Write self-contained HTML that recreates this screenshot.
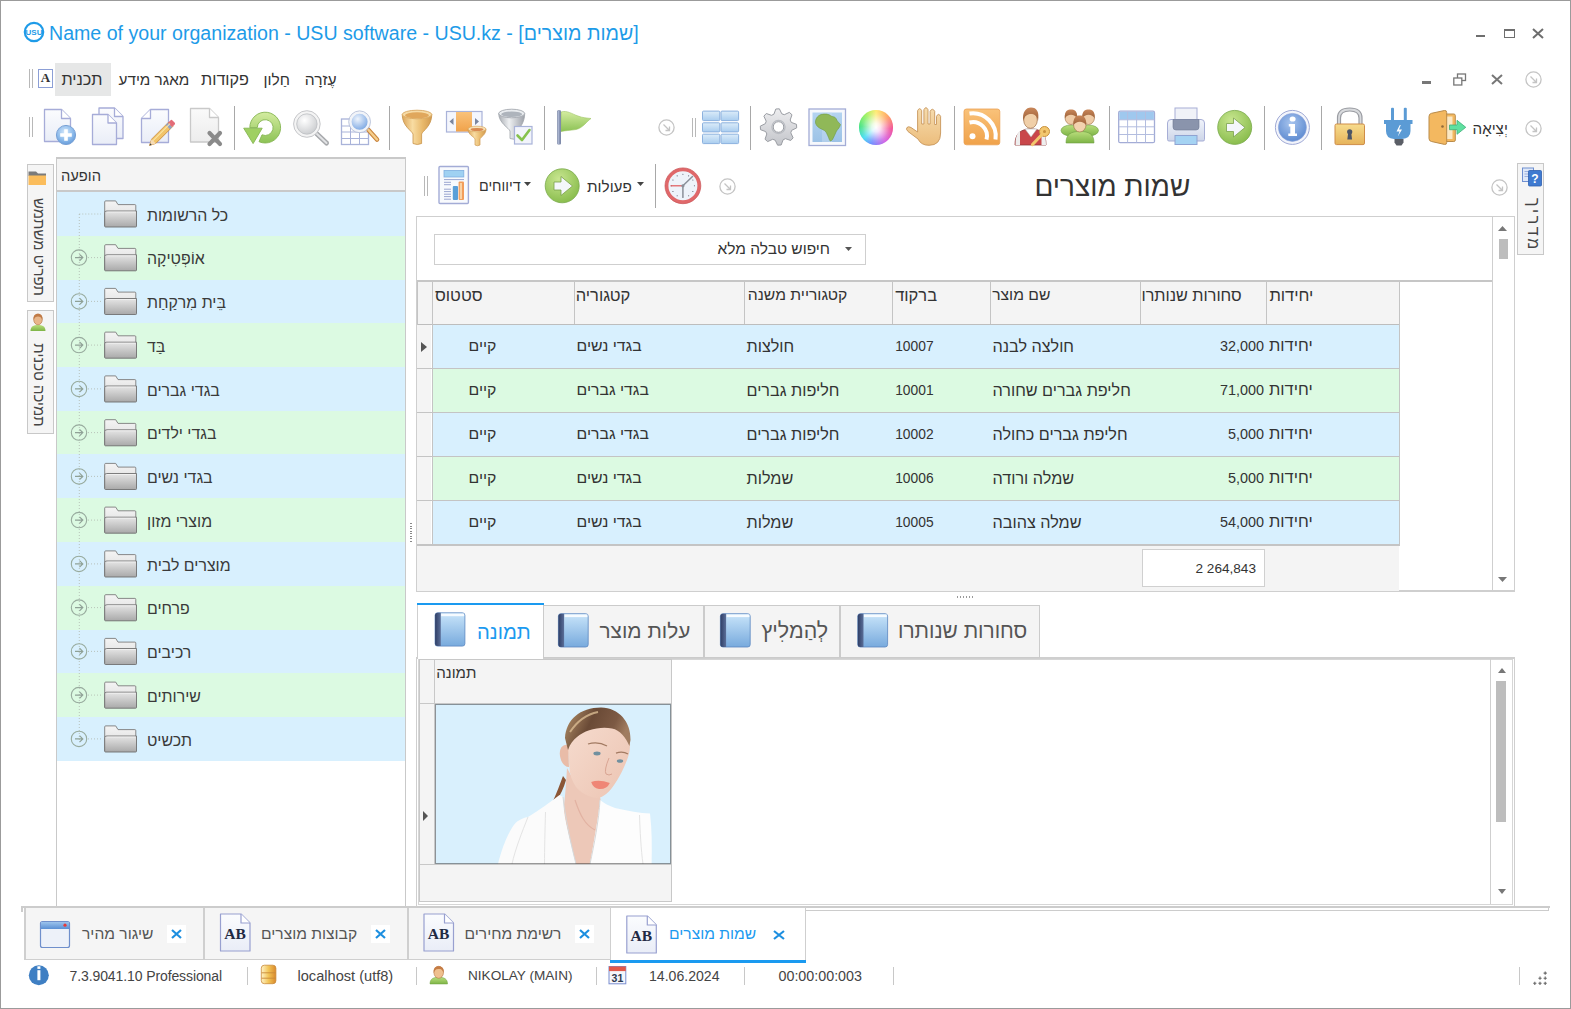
<!DOCTYPE html>
<html><head><meta charset="utf-8"><title>USU</title>
<style>
html,body{margin:0;padding:0;width:1571px;height:1009px;overflow:hidden;background:#fff}
.a{position:absolute}
.t{position:absolute;white-space:pre;line-height:1;font-family:"Liberation Sans", sans-serif}
svg{overflow:visible}
</style></head><body>
<div class="a" style="left:0px;top:0px;width:1571px;height:1009px;border:1px solid #9b9b9b;box-sizing:border-box;background:#fff"></div>
<svg class="a" style="left:23px;top:21px" width="22" height="22" viewBox="0 0 22 22"><circle cx="11" cy="11" r="9.2" fill="none" stroke="#1e9be8" stroke-width="2.2"/><text x="11" y="14" font-family="Liberation Sans" font-weight="bold" font-size="8" fill="#1e9be8" text-anchor="middle">USU</text></svg>
<div class="t " style="left:49.0px;top:24.3px;font-size:19.6px;color:#1d9be8;">Name of your organization - USU software - USU.kz - [שמות מוצרים]</div>
<div class="a" style="left:1476px;top:35px;width:9px;height:2px;background:#6e6e6e"></div>
<div class="a" style="left:1503.5px;top:29px;width:11.5px;height:9px;border:1px solid #6e6e6e;border-top-width:2px;box-sizing:border-box"></div>
<svg class="a" style="left:1532px;top:28px" width="12" height="11" viewBox="0 0 12 11"><path d="M1 1L11 10M11 1L1 10" stroke="#6e6e6e" stroke-width="2"/></svg>
<div class="a" style="left:29px;top:69px;width:1px;height:19px;background:#b8b8b8"></div>
<div class="a" style="left:32px;top:69px;width:1px;height:19px;background:#b8b8b8"></div>
<div class="a" style="left:38px;top:69px;width:15px;height:19px;border:1px solid #8c9fd6;box-sizing:border-box;background:#fff"></div>
<div class="a" style="left:38px;top:70px;width:15px;text-align:center;font:bold 13px 'Liberation Serif';color:#333">A</div>
<div class="a" style="left:55px;top:62.6px;width:56px;height:33.4px;background:#e6e7e7"></div>
<div class="t " style="left:61.5px;top:71.2px;font-size:16.2px;color:#333;">תכנית</div>
<div class="t " style="left:118.5px;top:72.0px;font-size:15.3px;color:#333;">מאגר מידע</div>
<div class="t " style="left:201.0px;top:71.2px;font-size:16.2px;color:#333;">פקודות</div>
<div class="t " style="left:263.5px;top:71.8px;font-size:15.5px;color:#333;">חַלון</div>
<div class="t " style="left:304.8px;top:71.7px;font-size:15.6px;color:#333;">עֶזרָה</div>
<div class="a" style="left:1422px;top:81px;width:9px;height:3px;background:#777"></div>
<svg class="a" style="left:1453px;top:73px" width="14" height="13" viewBox="0 0 14 13"><rect x="4.5" y="1" width="8" height="6.5" fill="none" stroke="#777" stroke-width="1.3"/><rect x="0.8" y="5" width="8" height="7" fill="#fff" stroke="#777" stroke-width="1.3"/></svg>
<svg class="a" style="left:1491px;top:74px" width="12" height="11" viewBox="0 0 12 11"><path d="M1 1L11 10M11 1L1 10" stroke="#777" stroke-width="2"/></svg>
<svg class="a" style="left:1523.5px;top:69.5px" width="19" height="19" viewBox="0 0 19 19"><circle cx="9.5" cy="9.5" r="7.6" fill="none" stroke="#c4c4c4" stroke-width="1.3"/><path d="M6.5 6.5L12.5 12.5M12.5 8.5V12.5H8.5" fill="none" stroke="#c4c4c4" stroke-width="1.3"/></svg>
<div class="a" style="left:29px;top:117px;width:1px;height:20px;background:#b8b8b8"></div>
<div class="a" style="left:32px;top:117px;width:1px;height:20px;background:#b8b8b8"></div>
<div class="a" style="left:234px;top:106px;width:1px;height:44px;background:#a8a8a8"></div>
<div class="a" style="left:389px;top:106px;width:1px;height:44px;background:#a8a8a8"></div>
<div class="a" style="left:544px;top:106px;width:1px;height:44px;background:#a8a8a8"></div>
<div class="a" style="left:750px;top:106px;width:1px;height:44px;background:#a8a8a8"></div>
<div class="a" style="left:954px;top:106px;width:1px;height:44px;background:#a8a8a8"></div>
<div class="a" style="left:1109px;top:106px;width:1px;height:44px;background:#a8a8a8"></div>
<div class="a" style="left:1264px;top:106px;width:1px;height:44px;background:#a8a8a8"></div>
<div class="a" style="left:1321px;top:106px;width:1px;height:44px;background:#a8a8a8"></div>
<svg class="a" style="left:657.0px;top:118.0px" width="19" height="19" viewBox="0 0 19 19"><circle cx="9.5" cy="9.5" r="7.6" fill="none" stroke="#c4c4c4" stroke-width="1.3"/><path d="M6.5 6.5L12.5 12.5M12.5 8.5V12.5H8.5" fill="none" stroke="#c4c4c4" stroke-width="1.3"/></svg>
<div class="a" style="left:692px;top:118px;width:1px;height:19px;background:#b8b8b8"></div>
<div class="a" style="left:695px;top:118px;width:1px;height:19px;background:#b8b8b8"></div>
<svg class="a" style="left:1523.5px;top:118.5px" width="19" height="19" viewBox="0 0 19 19"><circle cx="9.5" cy="9.5" r="7.6" fill="none" stroke="#c4c4c4" stroke-width="1.3"/><path d="M6.5 6.5L12.5 12.5M12.5 8.5V12.5H8.5" fill="none" stroke="#c4c4c4" stroke-width="1.3"/></svg>
<div class="t " style="left:1472.5px;top:121.1px;font-size:15.2px;color:#333;">יְצִיאָה</div>

<div class="a" style="left:858.7px;top:110.3px;width:34.4px;height:34.4px;border-radius:50%;background:conic-gradient(from 0deg,#ffe860,#ff9a50 45deg,#f03a8a 95deg,#d050e0 145deg,#6080ff 195deg,#30d8f0 230deg,#30e070 275deg,#90f050 320deg,#ffe860)"><div style="width:100%;height:100%;border-radius:50%;background:radial-gradient(circle,#ffffff 0%,rgba(255,255,255,0.85) 18%,rgba(255,255,255,0.25) 55%,rgba(255,255,255,0) 80%)"></div></div>
<div class="a" style="left:27px;top:164px;width:27px;height:138px;background:#f5f5f5;border:1px solid #c8c8c8;box-sizing:border-box"></div>
<div class="a" style="left:27px;top:310px;width:27px;height:124px;background:#f5f5f5;border:1px solid #c8c8c8;box-sizing:border-box"></div>
<div class="t" style="left:38.5px;top:247px;font-size:15px;color:#444;transform:translate(-50%,-50%) rotate(90deg)">תפריט משתמש</div>
<div class="t" style="left:38.5px;top:385px;font-size:15px;color:#444;transform:translate(-50%,-50%) rotate(90deg)">תמיכה טכנית</div>
<div class="a" style="left:56px;top:157px;width:350px;height:750px;border:1px solid #c9c9c9;border-width:2px 1px 1px 1px;box-sizing:border-box;background:#fff"></div>
<div class="a" style="left:57px;top:159px;width:348px;height:33px;background:#f4f4f4;border-bottom:2px solid #c9c9c9;box-sizing:border-box"></div>
<div class="t " style="left:61.0px;top:169.0px;font-size:14.7px;color:#333;">הופעה</div>
<div class="a" style="left:57px;top:192px;width:348px;height:44px;background:#d8f0fe"></div>

<div class="t " style="left:147.0px;top:207.6px;font-size:15.9px;color:#3a3a3a;">כל הרשומות</div>
<div class="a" style="left:57px;top:236px;width:348px;height:44px;background:#dcfae2"></div>


<div class="t " style="left:147.0px;top:251.3px;font-size:15.9px;color:#3a3a3a;">אוֹפְּטִיקָה</div>
<div class="a" style="left:57px;top:280px;width:348px;height:43px;background:#d8f0fe"></div>


<div class="t " style="left:147.0px;top:295.1px;font-size:15.9px;color:#3a3a3a;">בֵּית מִרקַחַת</div>
<div class="a" style="left:57px;top:323px;width:348px;height:44px;background:#dcfae2"></div>


<div class="t " style="left:147.0px;top:338.8px;font-size:15.9px;color:#3a3a3a;">בַּד</div>
<div class="a" style="left:57px;top:367px;width:348px;height:44px;background:#d8f0fe"></div>


<div class="t " style="left:147.0px;top:382.6px;font-size:15.9px;color:#3a3a3a;">בגדי גברים</div>
<div class="a" style="left:57px;top:411px;width:348px;height:43px;background:#dcfae2"></div>


<div class="t " style="left:147.0px;top:426.3px;font-size:15.9px;color:#3a3a3a;">בגדי ילדים</div>
<div class="a" style="left:57px;top:454px;width:348px;height:44px;background:#d8f0fe"></div>


<div class="t " style="left:147.0px;top:470.1px;font-size:15.9px;color:#3a3a3a;">בגדי נשים</div>
<div class="a" style="left:57px;top:498px;width:348px;height:44px;background:#dcfae2"></div>


<div class="t " style="left:147.0px;top:513.8px;font-size:15.9px;color:#3a3a3a;">מוצרי מזון</div>
<div class="a" style="left:57px;top:542px;width:348px;height:44px;background:#d8f0fe"></div>


<div class="t " style="left:147.0px;top:557.6px;font-size:15.9px;color:#3a3a3a;">מוצרים לבית</div>
<div class="a" style="left:57px;top:586px;width:348px;height:44px;background:#dcfae2"></div>


<div class="t " style="left:147.0px;top:601.3px;font-size:15.9px;color:#3a3a3a;">פרחים</div>
<div class="a" style="left:57px;top:630px;width:348px;height:43px;background:#d8f0fe"></div>


<div class="t " style="left:147.0px;top:645.1px;font-size:15.9px;color:#3a3a3a;">רכיבים</div>
<div class="a" style="left:57px;top:673px;width:348px;height:44px;background:#dcfae2"></div>


<div class="t " style="left:147.0px;top:688.8px;font-size:15.9px;color:#3a3a3a;">שירותים</div>
<div class="a" style="left:57px;top:717px;width:348px;height:44px;background:#d8f0fe"></div>


<div class="t " style="left:147.0px;top:732.6px;font-size:15.9px;color:#3a3a3a;">תכשיט</div>

<div class="a" style="left:424px;top:176px;width:1px;height:20px;background:#b8b8b8"></div>
<div class="a" style="left:427px;top:176px;width:1px;height:20px;background:#b8b8b8"></div>
<div class="t " style="left:479.0px;top:179.3px;font-size:14.3px;color:#333;">דיווחים</div>
<svg class="a" style="left:524px;top:182px" width="8" height="5" viewBox="0 0 8 5"><path d="M0 0H7L3.5 4Z" fill="#444"/></svg>
<div class="t " style="left:587.0px;top:178.5px;font-size:15.3px;color:#333;">פעולות</div>
<svg class="a" style="left:637px;top:182px" width="8" height="5" viewBox="0 0 8 5"><path d="M0 0H7L3.5 4Z" fill="#444"/></svg>
<div class="a" style="left:655px;top:164px;width:1px;height:44px;background:#a8a8a8"></div>
<svg class="a" style="left:718.2px;top:176.9px" width="19" height="19" viewBox="0 0 19 19"><circle cx="9.5" cy="9.5" r="7.6" fill="none" stroke="#c4c4c4" stroke-width="1.3"/><path d="M6.5 6.5L12.5 12.5M12.5 8.5V12.5H8.5" fill="none" stroke="#c4c4c4" stroke-width="1.3"/></svg>
<div class="t " style="left:1034.5px;top:173.3px;font-size:27.9px;color:#333;">שמות מוצרים</div>
<svg class="a" style="left:1489.5px;top:177.5px" width="19" height="19" viewBox="0 0 19 19"><circle cx="9.5" cy="9.5" r="7.6" fill="none" stroke="#c4c4c4" stroke-width="1.3"/><path d="M6.5 6.5L12.5 12.5M12.5 8.5V12.5H8.5" fill="none" stroke="#c4c4c4" stroke-width="1.3"/></svg>
<div class="a" style="left:1517px;top:163px;width:27px;height:92px;background:#f5f5f5;border:1px solid #c8c8c8;box-sizing:border-box"></div>
<div class="t" style="left:1532.5px;top:225px;font-size:16px;letter-spacing:2.6px;color:#444;transform:translate(-50%,-50%) rotate(90deg)">מדריך</div>
<div class="a" style="left:416px;top:216px;width:1099px;height:376px;border:1px solid #cfcfcf;border-width:1px 1px 2px 1px;box-sizing:border-box;background:#fff"></div>
<div class="a" style="left:434px;top:234px;width:432px;height:31px;border:1px solid #cfcfcf;box-sizing:border-box;background:#fff"></div>
<div class="t " style="left:717.5px;top:240.8px;font-size:15.5px;color:#333;">חיפוש טבלה מלא</div>
<svg class="a" style="left:845px;top:247px" width="8" height="5" viewBox="0 0 8 5"><path d="M0 0H7L3.5 4Z" fill="#555"/></svg>
<div class="a" style="left:417px;top:280px;width:1076px;height:2px;background:#c6c6c6"></div>
<div class="a" style="left:417px;top:282px;width:982px;height:42px;background:#f4f4f4"></div>
<div class="a" style="left:417px;top:324px;width:982px;height:1px;background:#bdbdbd"></div>
<div class="a" style="left:574px;top:282px;width:1px;height:42px;background:#c4c4c4"></div>
<div class="a" style="left:744px;top:282px;width:1px;height:42px;background:#c4c4c4"></div>
<div class="a" style="left:892px;top:282px;width:1px;height:42px;background:#c4c4c4"></div>
<div class="a" style="left:990px;top:282px;width:1px;height:42px;background:#c4c4c4"></div>
<div class="a" style="left:1140px;top:282px;width:1px;height:42px;background:#c4c4c4"></div>
<div class="a" style="left:1266px;top:282px;width:1px;height:42px;background:#c4c4c4"></div>
<div class="a" style="left:1399px;top:282px;width:1px;height:42px;background:#c4c4c4"></div>
<div class="a" style="left:432px;top:282px;width:1px;height:264px;background:#c4c4c4"></div>
<div class="a" style="left:1399px;top:282px;width:1px;height:264px;background:#c4c4c4"></div>
<div class="a" style="left:417px;top:282px;width:1px;height:264px;background:#c4c4c4"></div>
<div class="t " style="left:435.0px;top:286.5px;font-size:16.5px;color:#333;">סטטוס</div>
<div class="t " style="left:575.7px;top:286.5px;font-size:16.5px;color:#333;">קטגוריה</div>
<div class="t " style="left:747.8px;top:287.2px;font-size:15.7px;color:#333;">קטגוריית משנה</div>
<div class="t " style="left:895.2px;top:286.5px;font-size:16.5px;color:#333;">ברקוד</div>
<div class="t " style="left:992.2px;top:287.2px;font-size:15.7px;color:#333;">שם מוצר</div>
<div class="t " style="left:1141.5px;top:286.7px;font-size:16.2px;color:#333;">סחורות שנותרו</div>
<div class="t " style="left:1269.4px;top:286.5px;font-size:16.5px;color:#333;">יחידות</div>
<div class="a" style="left:432px;top:325px;width:967px;height:43px;background:#d8f0fe"></div>
<div class="a" style="left:417px;top:368px;width:982px;height:1px;background:#c4c4c4"></div>
<div class="a" style="left:417px;top:325px;width:14px;height:43px;background:#f4f4f4"></div>
<div class="a" style="left:432px;top:325px;width:1px;height:43px;background:#c4c4c4"></div>
<div class="t " style="left:468.5px;top:337.9px;font-size:15.8px;color:#333;">קיים</div>
<div class="t " style="left:576.5px;top:337.9px;font-size:15.8px;color:#333;">בגדי נשים</div>
<div class="t " style="left:746.5px;top:337.5px;font-size:16.2px;color:#333;">חולצות</div>
<div class="t " style="left:895.2px;top:339.6px;font-size:13.8px;color:#333;">10007</div>
<div class="t " style="left:992.5px;top:337.5px;font-size:16.2px;color:#333;">חולצה לבנה</div>
<div class="t" style="left:1100px;width:164px;text-align:right;top:339.1px;font-size:14.4px;color:#333">32,000</div>
<div class="t " style="left:1269.0px;top:337.4px;font-size:16.4px;color:#333;">יחידות</div>
<div class="a" style="left:432px;top:369px;width:967px;height:43px;background:#dcfae2"></div>
<div class="a" style="left:417px;top:412px;width:982px;height:1px;background:#c4c4c4"></div>
<div class="a" style="left:417px;top:369px;width:14px;height:43px;background:#f4f4f4"></div>
<div class="a" style="left:432px;top:369px;width:1px;height:43px;background:#c4c4c4"></div>
<div class="t " style="left:468.5px;top:381.9px;font-size:15.8px;color:#333;">קיים</div>
<div class="t " style="left:576.5px;top:381.9px;font-size:15.8px;color:#333;">בגדי גברים</div>
<div class="t " style="left:746.5px;top:381.5px;font-size:16.2px;color:#333;">חליפות גברים</div>
<div class="t " style="left:895.2px;top:383.6px;font-size:13.8px;color:#333;">10001</div>
<div class="t " style="left:992.5px;top:381.5px;font-size:16.2px;color:#333;">חליפת גברים שחורה</div>
<div class="t" style="left:1100px;width:164px;text-align:right;top:383.1px;font-size:14.4px;color:#333">71,000</div>
<div class="t " style="left:1269.0px;top:381.4px;font-size:16.4px;color:#333;">יחידות</div>
<div class="a" style="left:432px;top:413px;width:967px;height:43px;background:#d8f0fe"></div>
<div class="a" style="left:417px;top:456px;width:982px;height:1px;background:#c4c4c4"></div>
<div class="a" style="left:417px;top:413px;width:14px;height:43px;background:#f4f4f4"></div>
<div class="a" style="left:432px;top:413px;width:1px;height:43px;background:#c4c4c4"></div>
<div class="t " style="left:468.5px;top:425.9px;font-size:15.8px;color:#333;">קיים</div>
<div class="t " style="left:576.5px;top:425.9px;font-size:15.8px;color:#333;">בגדי גברים</div>
<div class="t " style="left:746.5px;top:425.5px;font-size:16.2px;color:#333;">חליפות גברים</div>
<div class="t " style="left:895.2px;top:427.6px;font-size:13.8px;color:#333;">10002</div>
<div class="t " style="left:992.5px;top:425.5px;font-size:16.2px;color:#333;">חליפת גברים כחולה</div>
<div class="t" style="left:1100px;width:164px;text-align:right;top:427.1px;font-size:14.4px;color:#333">5,000</div>
<div class="t " style="left:1269.0px;top:425.4px;font-size:16.4px;color:#333;">יחידות</div>
<div class="a" style="left:432px;top:457px;width:967px;height:43px;background:#dcfae2"></div>
<div class="a" style="left:417px;top:500px;width:982px;height:1px;background:#c4c4c4"></div>
<div class="a" style="left:417px;top:457px;width:14px;height:43px;background:#f4f4f4"></div>
<div class="a" style="left:432px;top:457px;width:1px;height:43px;background:#c4c4c4"></div>
<div class="t " style="left:468.5px;top:469.9px;font-size:15.8px;color:#333;">קיים</div>
<div class="t " style="left:576.5px;top:469.9px;font-size:15.8px;color:#333;">בגדי נשים</div>
<div class="t " style="left:746.5px;top:469.5px;font-size:16.2px;color:#333;">שמלות</div>
<div class="t " style="left:895.2px;top:471.6px;font-size:13.8px;color:#333;">10006</div>
<div class="t " style="left:992.5px;top:469.5px;font-size:16.2px;color:#333;">שמלה ורודה</div>
<div class="t" style="left:1100px;width:164px;text-align:right;top:471.1px;font-size:14.4px;color:#333">5,000</div>
<div class="t " style="left:1269.0px;top:469.4px;font-size:16.4px;color:#333;">יחידות</div>
<div class="a" style="left:432px;top:501px;width:967px;height:43px;background:#d8f0fe"></div>
<div class="a" style="left:417px;top:544px;width:982px;height:1px;background:#c4c4c4"></div>
<div class="a" style="left:417px;top:501px;width:14px;height:43px;background:#f4f4f4"></div>
<div class="a" style="left:432px;top:501px;width:1px;height:43px;background:#c4c4c4"></div>
<div class="t " style="left:468.5px;top:513.9px;font-size:15.8px;color:#333;">קיים</div>
<div class="t " style="left:576.5px;top:513.9px;font-size:15.8px;color:#333;">בגדי נשים</div>
<div class="t " style="left:746.5px;top:513.5px;font-size:16.2px;color:#333;">שמלות</div>
<div class="t " style="left:895.2px;top:515.6px;font-size:13.8px;color:#333;">10005</div>
<div class="t " style="left:992.5px;top:513.5px;font-size:16.2px;color:#333;">שמלה צהובה</div>
<div class="t" style="left:1100px;width:164px;text-align:right;top:515.1px;font-size:14.4px;color:#333">54,000</div>
<div class="t " style="left:1269.0px;top:513.4px;font-size:16.4px;color:#333;">יחידות</div>
<svg class="a" style="left:421px;top:342px" width="7" height="10" viewBox="0 0 7 10"><path d="M0 0L6 5L0 10Z" fill="#555"/></svg>
<div class="a" style="left:417px;top:546px;width:982px;height:45px;background:#f4f4f4"></div>
<div class="a" style="left:417px;top:545px;width:982px;height:1px;background:#c4c4c4"></div>
<div class="a" style="left:1142px;top:549px;width:123px;height:38px;border:1px solid #d0d0d0;box-sizing:border-box;background:#fff"></div>
<div class="t" style="left:1150px;width:106px;text-align:right;top:562px;font-size:13.6px;color:#333">2 264,843</div>
<div class="a" style="left:1492px;top:217px;width:1px;height:374px;background:#cfcfcf"></div>
<svg class="a" style="left:1498px;top:226px" width="9" height="5" viewBox="0 0 9 5"><path d="M0 5H9L4.5 0Z" fill="#777"/></svg>
<div class="a" style="left:1499px;top:239px;width:9px;height:20px;background:#bdbdbd"></div>
<svg class="a" style="left:1498px;top:577px" width="9" height="5" viewBox="0 0 9 5"><path d="M0 0H9L4.5 5Z" fill="#777"/></svg>
<div class="a" style="left:957px;top:596px;width:18px;height:2px;background:repeating-linear-gradient(90deg,#999 0 1px,transparent 1px 3px)"></div>
<div class="a" style="left:410px;top:523px;width:1.5px;height:19px;background:repeating-linear-gradient(180deg,#888 0 1.2px,transparent 1.2px 2.55px)"></div>
<div class="a" style="left:416px;top:657px;width:1099px;height:250px;border:1px solid #cfcfcf;border-width:2px 1px 1px 1px;box-sizing:border-box;background:#fff"></div>
<div class="a" style="left:417px;top:603px;width:127px;height:56px;background:#fff;border-left:1px solid #cfcfcf;border-right:1px solid #cfcfcf;box-sizing:border-box"></div>
<div class="a" style="left:417px;top:603px;width:127px;height:2px;background:#1a9af0"></div>
<div class="a" style="left:543px;top:605px;width:161px;height:53px;background:#f4f4f4;border:1px solid #cbcbcb;box-sizing:border-box"></div>
<div class="a" style="left:704px;top:605px;width:136px;height:53px;background:#f4f4f4;border:1px solid #cbcbcb;box-sizing:border-box"></div>
<div class="a" style="left:840px;top:605px;width:200px;height:53px;background:#f4f4f4;border:1px solid #cbcbcb;box-sizing:border-box"></div>

<div class="t " style="left:477.0px;top:621.8px;font-size:20.2px;color:#1b9af0;">תמונה</div>

<div class="t " style="left:599.5px;top:621.3px;font-size:20.8px;color:#555;">עלות מוצר</div>

<div class="t " style="left:761.5px;top:620.8px;font-size:21.4px;color:#555;">לְהַמלִיץ</div>

<div class="t " style="left:898.0px;top:621.2px;font-size:20.9px;color:#555;">סחורות שנותרו</div>
<div class="a" style="left:418px;top:659px;width:1095px;height:246px;border:1px solid #d6d6d6;box-sizing:border-box"></div>
<div class="a" style="left:419px;top:659px;width:253px;height:243px;border:1px solid #c8c8c8;box-sizing:border-box;background:#f4f4f4"></div>
<div class="a" style="left:434px;top:660px;width:1px;height:204px;background:#c8c8c8"></div>
<div class="a" style="left:420px;top:703px;width:251px;height:1px;background:#c8c8c8"></div>
<div class="a" style="left:420px;top:864px;width:251px;height:1px;background:#c8c8c8"></div>
<div class="t " style="left:436.2px;top:665.4px;font-size:15.1px;color:#333;">תמונה</div>
<svg class="a" style="left:423px;top:811px" width="6" height="10" viewBox="0 0 6 10"><path d="M0 0L5 5L0 10Z" fill="#555"/></svg>

<div class="a" style="left:1490px;top:659px;width:1px;height:245px;background:#cfcfcf"></div>
<svg class="a" style="left:1497.5px;top:668px" width="8" height="5" viewBox="0 0 8 5"><path d="M0 5H8L4 0Z" fill="#777"/></svg>
<div class="a" style="left:1496px;top:681px;width:10px;height:141px;background:#bdbdbd"></div>
<svg class="a" style="left:1497.5px;top:889px" width="8" height="5" viewBox="0 0 8 5"><path d="M0 0H8L4 5Z" fill="#777"/></svg>
<div class="a" style="left:21px;top:906px;width:1529px;height:6px;border:2px solid #cccccc;border-bottom:0;box-sizing:border-box"></div>
<div class="a" style="left:24px;top:908px;width:1526px;height:4px;background:#fff"></div>
<div class="a" style="left:24px;top:908px;width:179px;height:52px;background:#f5f5f5;border-left:2px solid #cfcfcf;box-sizing:border-box"></div>
<div class="a" style="left:203px;top:908px;width:204px;height:52px;background:#f5f5f5;border-left:2px solid #cfcfcf;box-sizing:border-box"></div>
<div class="a" style="left:407px;top:908px;width:203px;height:52px;background:#f5f5f5;border-left:2px solid #cfcfcf;box-sizing:border-box"></div>
<div class="a" style="left:610px;top:907px;width:196px;height:54px;background:#fff;border:1px solid #cfcfcf;box-sizing:border-box"></div>
<div class="a" style="left:610px;top:960px;width:196px;height:3px;background:#1a9af0"></div>
<div class="a" style="left:24px;top:959px;width:586px;height:1px;background:#cfcfcf"></div>
<div class="a" style="left:806px;top:910px;width:743px;height:1px;background:#cccccc"></div>
<div class="a" style="left:1548px;top:906px;width:1px;height:5px;background:#cccccc"></div>

<div class="t " style="left:82.0px;top:926.2px;font-size:15.6px;color:#555;">שיגור מהיר</div>
<div class="t " style="left:261.0px;top:926.2px;font-size:15.6px;color:#555;">קבוצות מוצרים</div>
<div class="t " style="left:464.5px;top:926.2px;font-size:15.6px;color:#555;">רשימת מחירים</div>
<div class="t " style="left:669.0px;top:926.2px;font-size:15.6px;color:#1b9af0;">שמות מוצרים</div>
<div class="a" style="left:167px;top:925px;width:19px;height:18px;background:#fff"></div>
<svg class="a" style="left:171px;top:929px" width="11" height="10" viewBox="0 0 11 10"><path d="M1 1L10 9M10 1L1 9" stroke="#1d8fe0" stroke-width="2.2"/></svg>
<div class="a" style="left:371px;top:925px;width:19px;height:18px;background:#fff"></div>
<svg class="a" style="left:375px;top:929px" width="11" height="10" viewBox="0 0 11 10"><path d="M1 1L10 9M10 1L1 9" stroke="#1d8fe0" stroke-width="2.2"/></svg>
<div class="a" style="left:575px;top:925px;width:19px;height:18px;background:#fff"></div>
<svg class="a" style="left:579px;top:929px" width="11" height="10" viewBox="0 0 11 10"><path d="M1 1L10 9M10 1L1 9" stroke="#1d8fe0" stroke-width="2.2"/></svg>
<svg class="a" style="left:773px;top:930px" width="12" height="10" viewBox="0 0 12 10"><path d="M1 1L11 9M11 1L1 9" stroke="#1d8fe0" stroke-width="2.2"/></svg>
<div class="a" style="left:247px;top:967px;width:1px;height:18px;background:#c8c8c8"></div>
<div class="a" style="left:416px;top:967px;width:1px;height:18px;background:#c8c8c8"></div>
<div class="a" style="left:596px;top:967px;width:1px;height:18px;background:#c8c8c8"></div>
<div class="a" style="left:744px;top:967px;width:1px;height:18px;background:#c8c8c8"></div>
<div class="a" style="left:893px;top:967px;width:1px;height:18px;background:#c8c8c8"></div>
<div class="a" style="left:1519px;top:967px;width:1px;height:18px;background:#c8c8c8"></div>
<div class="t " style="left:69.5px;top:969.1px;font-size:14px;color:#444;letter-spacing:-0.1px">7.3.9041.10 Professional</div>
<div class="t " style="left:297.5px;top:968.6px;font-size:14.6px;color:#444;">localhost (utf8)</div>
<div class="t " style="left:468.0px;top:969.4px;font-size:13.6px;color:#444;">NIKOLAY (MAIN)</div>
<div class="t " style="left:649.0px;top:969.0px;font-size:14.1px;color:#444;">14.06.2024</div>
<div class="t " style="left:778.5px;top:968.8px;font-size:14.3px;color:#444;">00:00:00:003</div>

<svg class="a" style="left:0;top:0" width="1571" height="1009"><path d="M1543.6000000000001 973.1H1546.8M1545.2 971.5V974.7" stroke="#666" stroke-width="1.1"/><path d="M1538.4 978.2H1541.6M1540 976.6V979.8000000000001" stroke="#666" stroke-width="1.1"/><path d="M1543.6000000000001 978.2H1546.8M1545.2 976.6V979.8000000000001" stroke="#666" stroke-width="1.1"/><path d="M1533.2 983.3H1536.3999999999999M1534.8 981.6999999999999V984.9" stroke="#666" stroke-width="1.1"/><path d="M1538.4 983.3H1541.6M1540 981.6999999999999V984.9" stroke="#666" stroke-width="1.1"/><path d="M1543.6000000000001 983.3H1546.8M1545.2 981.6999999999999V984.9" stroke="#666" stroke-width="1.1"/></svg>
<svg class="a" style="left:0;top:0;overflow:visible" width="1571" height="1009" viewBox="0 0 1571 1009">
<defs>
<linearGradient id="gPage" x1="0" y1="0" x2="0" y2="1"><stop offset="0" stop-color="#fbfcfe"/><stop offset="1" stop-color="#e9edf7"/></linearGradient>
<linearGradient id="gPageG" x1="0" y1="0" x2="0" y2="1"><stop offset="0" stop-color="#fafafa"/><stop offset="1" stop-color="#ececec"/></linearGradient>
<radialGradient id="gBlueBall" cx="0.45" cy="0.35" r="0.7"><stop offset="0" stop-color="#d6e9fb"/><stop offset="0.6" stop-color="#8dbbeb"/><stop offset="1" stop-color="#5f95d6"/></radialGradient>
<linearGradient id="gGreen" x1="0" y1="0" x2="0" y2="1"><stop offset="0" stop-color="#d4eca0"/><stop offset="1" stop-color="#8cc255"/></linearGradient>
<radialGradient id="gGreenBall" cx="0.4" cy="0.3" r="0.8"><stop offset="0" stop-color="#c8e690"/><stop offset="1" stop-color="#82b845"/></radialGradient>
<radialGradient id="gLens" cx="0.4" cy="0.35" r="0.7"><stop offset="0" stop-color="#ffffff"/><stop offset="1" stop-color="#c4c6c9"/></radialGradient>
<radialGradient id="gLensB" cx="0.4" cy="0.35" r="0.7"><stop offset="0" stop-color="#eef4fc"/><stop offset="1" stop-color="#6f9fe0"/></radialGradient>
<linearGradient id="gGold" x1="0" y1="0" x2="1" y2="0"><stop offset="0" stop-color="#dca55a"/><stop offset="0.35" stop-color="#f8dca2"/><stop offset="0.7" stop-color="#e8b86a"/><stop offset="1" stop-color="#d19a50"/></linearGradient>
<linearGradient id="gSilver" x1="0" y1="0" x2="1" y2="0"><stop offset="0" stop-color="#a9adb3"/><stop offset="0.4" stop-color="#eef0f2"/><stop offset="1" stop-color="#9ca0a8"/></linearGradient>
<linearGradient id="gOrange" x1="0" y1="0" x2="0" y2="1"><stop offset="0" stop-color="#f9c27a"/><stop offset="1" stop-color="#f0a24a"/></linearGradient>
<linearGradient id="gGray" x1="0" y1="0" x2="0" y2="1"><stop offset="0" stop-color="#ededef"/><stop offset="1" stop-color="#c3c5ca"/></linearGradient>
<linearGradient id="gCell" x1="0" y1="0" x2="0" y2="1"><stop offset="0" stop-color="#dcecf9"/><stop offset="1" stop-color="#a9cdef"/></linearGradient>
<linearGradient id="gMapSea" x1="0" y1="0" x2="0" y2="1"><stop offset="0" stop-color="#b4d4f0"/><stop offset="1" stop-color="#9cc2e6"/></linearGradient>
<linearGradient id="gHand" x1="0" y1="0" x2="0" y2="1"><stop offset="0" stop-color="#f6dcae"/><stop offset="1" stop-color="#ecbd7c"/></linearGradient>
<linearGradient id="gLock" x1="0" y1="0" x2="0" y2="1"><stop offset="0" stop-color="#f7dc8e"/><stop offset="1" stop-color="#e6b35a"/></linearGradient>
<radialGradient id="gInfo" cx="0.45" cy="0.35" r="0.7"><stop offset="0" stop-color="#a7c4ee"/><stop offset="1" stop-color="#5a88cf"/></radialGradient>
<linearGradient id="gFolderB" x1="0" y1="0" x2="0" y2="1"><stop offset="0" stop-color="#f4f4f4"/><stop offset="1" stop-color="#d8d8d8"/></linearGradient>
<linearGradient id="gFolderF" x1="0" y1="0" x2="0" y2="1"><stop offset="0" stop-color="#e6e6e6"/><stop offset="1" stop-color="#a9a9a9"/></linearGradient>
<linearGradient id="gBook" x1="0" y1="0" x2="0" y2="1"><stop offset="0" stop-color="#c9e5fa"/><stop offset="1" stop-color="#78aadd"/></linearGradient>
<linearGradient id="gSpine" x1="0" y1="0" x2="1" y2="0"><stop offset="0" stop-color="#2f3e66"/><stop offset="1" stop-color="#5a6e98"/></linearGradient>
<linearGradient id="gDB" x1="0" y1="0" x2="1" y2="0"><stop offset="0" stop-color="#fff3c8"/><stop offset="0.5" stop-color="#f2c456"/><stop offset="1" stop-color="#d9892c"/></linearGradient>
<linearGradient id="gPlate" x1="0" y1="0" x2="0" y2="1"><stop offset="0" stop-color="#f1f4fb"/><stop offset="1" stop-color="#cdd5e8"/></linearGradient>
<linearGradient id="gWinTitle" x1="0" y1="0" x2="0" y2="1"><stop offset="0" stop-color="#9cc3ec"/><stop offset="1" stop-color="#5a8fd4"/></linearGradient>
<linearGradient id="gHair" x1="0" y1="0" x2="1" y2="0.3"><stop offset="0" stop-color="#b8956c"/><stop offset="0.45" stop-color="#6a4a36"/><stop offset="0.8" stop-color="#7d5a44"/><stop offset="1" stop-color="#a07c60"/></linearGradient>
<linearGradient id="gSkin" x1="0" y1="0" x2="1" y2="1"><stop offset="0" stop-color="#f6dccf"/><stop offset="1" stop-color="#ecc4b2"/></linearGradient>
<linearGradient id="gUserHair" x1="0" y1="0" x2="0" y2="1"><stop offset="0" stop-color="#c9875a"/><stop offset="1" stop-color="#9b6038"/></linearGradient>
<linearGradient id="gUserGreen" x1="0" y1="0" x2="0" y2="1"><stop offset="0" stop-color="#b9de7c"/><stop offset="1" stop-color="#7db446"/></linearGradient>
</defs>
<path d="M44.5 109.5H61.5L70.5 118.5V141.5H44.5Z" fill="url(#gPage)" stroke="#a6acd8" stroke-width="1.3" stroke-linejoin="round"/><path d="M61.5 109.5V118.5H70.5" fill="#fff" stroke="#a6acd8" stroke-width="1.3" stroke-linejoin="round"/><circle cx="66" cy="135" r="9.6" fill="url(#gBlueBall)" stroke="#7aa2d6" stroke-width="1"/><path d="M66 129.2V140.8M60.2 135H71.8" stroke="#fff" stroke-width="3.6"/><path d="M99 108H114.5L123 116.5V138.5H99Z" fill="url(#gPage)" stroke="#a6acd8" stroke-width="1.3" stroke-linejoin="round"/><path d="M114.5 108V116.5H123" fill="#fff" stroke="#a6acd8" stroke-width="1.3" stroke-linejoin="round"/><path d="M92.5 114.5H108.0L116.5 123.0V144.5H92.5Z" fill="url(#gPage)" stroke="#a6acd8" stroke-width="1.3" stroke-linejoin="round"/><path d="M108.0 114.5V123.0H116.5" fill="#fff" stroke="#a6acd8" stroke-width="1.3" stroke-linejoin="round"/><path d="M150.5 109.5H168.5V142.5H141.5V118.5Z" fill="url(#gPage)" stroke="#a6acd8" stroke-width="1.3" stroke-linejoin="round"/><path d="M150.5 109.5V118.5H141.5" fill="#fff" stroke="#a6acd8" stroke-width="1.3" stroke-linejoin="round"/><g transform="translate(149.5 145.5) rotate(-45)"><path d="M0 0L6 -3H30V3H6Z" fill="#f2c46a" stroke="#c98c3c" stroke-width="0.8"/><path d="M0 0L6 -3V3Z" fill="#f6dcb6"/><path d="M0 0L2.2 -1.1V1.1Z" fill="#444"/><rect x="26" y="-3" width="3" height="6" fill="#8ea0c8"/><rect x="29" y="-3" width="5" height="6" rx="1.5" fill="#e36c78"/><path d="M6 -1H30" stroke="#fae6a8" stroke-width="1"/></g><path d="M190.5 108.5H209.5L218.5 117.5V142H190.5Z" fill="url(#gPageG)" stroke="#c9c9c9" stroke-width="1.3" stroke-linejoin="round"/><path d="M209.5 108.5V117.5H218.5" fill="#fff" stroke="#c9c9c9" stroke-width="1.3" stroke-linejoin="round"/><path d="M209.5 133L220 144M220 133L209.5 144" stroke="#8a8a8a" stroke-width="4.2" stroke-linecap="round"/><path d="M249.8 127.6A15.4 15.4 0 1 1 259.0 141.7L262.0 134.8A7.9 7.9 0 1 0 257.3 127.6Z" fill="url(#gGreen)" stroke="#86b552" stroke-width="0.9" stroke-linejoin="round"/><path d="M243.7 128.2H262.2L253.1 143.6Z" fill="#9fd062" stroke="#86b552" stroke-width="0.9" stroke-linejoin="round"/><path d="M317 134L326.5 143" stroke="#a6a8ab" stroke-width="5" stroke-linecap="round"/><path d="M317 134L326.5 143" stroke="#e2e3e5" stroke-width="2" stroke-linecap="round"/><circle cx="306.9" cy="124" r="11.8" fill="url(#gLens)" stroke="#f4f4f4" stroke-width="3"/><circle cx="306.9" cy="124" r="13.3" fill="none" stroke="#c6c7ca" stroke-width="1"/><circle cx="306.9" cy="124" r="10.2" fill="none" stroke="#bdbfc3" stroke-width="0.8"/><rect x="341.5" y="119" width="27" height="25.5" fill="#fff" stroke="#a9b3d9" stroke-width="1.3"/><path d="M350.5 119V144.5M359.5 119V144.5M341.5 126H368.5M341.5 132H368.5M341.5 138.5H368.5" stroke="#a9b3d9" stroke-width="1"/><path d="M368.5 130L377 139.5" stroke="#c9853e" stroke-width="4.6" stroke-linecap="round"/><path d="M368.5 130L377 139.5" stroke="#f6cf8c" stroke-width="2.4" stroke-linecap="round"/><circle cx="359.6" cy="121.8" r="9.3" fill="url(#gLensB)" stroke="#f2f4f8" stroke-width="2.6"/><circle cx="359.6" cy="121.8" r="10.9" fill="none" stroke="#b6bfd8" stroke-width="0.9"/><path d="M402.2 114.5C402.2 126 412 131 413 134V143.5Q417.3 145.5 421.6 143.5V134C422.6 131 431.8 126 431.8 114.5Z" fill="url(#gGold)" stroke="#c8934a" stroke-width="0.8"/><ellipse cx="417" cy="114.5" rx="14.8" ry="4.3" fill="#f6dba6" stroke="#d9a862" stroke-width="0.9"/><ellipse cx="417" cy="115.3" rx="12" ry="3" fill="#e0a75c"/><rect x="446.5" y="111.5" width="35.5" height="20.5" fill="#f4f6fc" stroke="#a9b3d9" stroke-width="1.2"/><rect x="456" y="112" width="16" height="19.5" fill="url(#gOrange)"/><path d="M449.5 121.5L453.5 118V125Z M479 121.5L475 118V125Z" fill="#7a859e"/><path d="M468 129C468 135 474.5 137 475 139V145Q477.5 146.5 480 145V139C480.5 137 486 135 486 129Z" fill="url(#gGold)" stroke="#cf9a52" stroke-width="0.7"/><ellipse cx="477" cy="129" rx="9" ry="2.8" fill="#f8e2b6" stroke="#d9a862" stroke-width="0.7"/><ellipse cx="477" cy="129.5" rx="6.5" ry="1.6" fill="#d98a52"/><path d="M498.7 113.5C498.7 123 509 128 510 131V138.5Q514 140 518 138.5V131C519 128 524.7 123 524.7 113.5Z" fill="url(#gSilver)" stroke="#9ea3aa" stroke-width="0.8"/><ellipse cx="511.7" cy="113.5" rx="13" ry="4.3" fill="#e9ecef" stroke="#a5a9b0" stroke-width="0.9"/><ellipse cx="511.7" cy="114.3" rx="10.5" ry="2.8" fill="#aeb4bc"/><rect x="514.5" y="126.5" width="17.5" height="17.5" fill="#f2f4fb" stroke="#a9b3d9" stroke-width="1.2"/><path d="M517.5 135.5L522 140L529.5 130" fill="none" stroke="#86c24e" stroke-width="2.6" stroke-linecap="round" stroke-linejoin="round"/><path d="M561 112C567 110 572 114 578 116C583 118 587 118 591 118.5C587 121 583 128 576 129.5C570 130.5 565 130.5 561 131.5Z" fill="url(#gGreen)" stroke="#9cc562" stroke-width="0.6"/><rect x="557.2" y="110.3" width="3.8" height="34.3" rx="1" fill="#7f8bab"/><rect x="558" y="111" width="1.3" height="33" fill="#a9b4d0"/><rect x="702.5" y="111.1" width="17.3" height="9.5" rx="1" fill="url(#gCell)" stroke="#8cb1de" stroke-width="1"/><rect x="702.5" y="122.8" width="17.3" height="9.1" rx="1" fill="url(#gCell)" stroke="#8cb1de" stroke-width="1"/><rect x="702.5" y="134.2" width="17.3" height="9.4" rx="1" fill="url(#gCell)" stroke="#8cb1de" stroke-width="1"/><rect x="721" y="111.1" width="17.6" height="9.5" rx="1" fill="url(#gCell)" stroke="#8cb1de" stroke-width="1"/><rect x="721" y="122.8" width="17.6" height="9.1" rx="1" fill="url(#gCell)" stroke="#8cb1de" stroke-width="1"/><rect x="721" y="134.2" width="17.6" height="9.4" rx="1" fill="url(#gCell)" stroke="#8cb1de" stroke-width="1"/><path d="M775.83 109.00 L779.39 108.82 L781.80 113.81 L784.31 114.71 L789.34 112.38 L791.99 114.78 L790.17 120.01 L791.30 122.42 L796.50 124.33 L796.68 127.89 L791.69 130.30 L790.79 132.81 L793.12 137.84 L790.72 140.49 L785.49 138.67 L783.08 139.80 L781.17 145.00 L777.61 145.18 L775.20 140.19 L772.69 139.29 L767.66 141.62 L765.01 139.22 L766.83 133.99 L765.70 131.58 L760.50 129.67 L760.32 126.11 L765.31 123.70 L766.21 121.19 L763.88 116.16 L766.28 113.51 L771.51 115.33 L773.92 114.20Z M783.8 127 A5.3 5.3 0 1 0 773.2 127 A5.3 5.3 0 1 0 783.8 127Z" fill="url(#gGray)" fill-rule="evenodd" stroke="#9a9da3" stroke-width="1" stroke-linejoin="round"/><circle cx="778.5" cy="127" r="6.6" fill="none" stroke="#b9bcc2" stroke-width="1.2"/><rect x="809" y="109" width="36.5" height="36.5" fill="#f6f8fc" stroke="#a3acd6" stroke-width="1.3"/><rect x="812.5" y="112.5" width="29.5" height="29.5" fill="url(#gMapSea)"/><rect x="822" y="112.5" width="10" height="29.5" fill="#c9def2" opacity="0.45"/><path d="M821 114.5C825 113.5 829 114 831 116C833 117 835 116.5 836 118.5C837 121 839 123 840.5 124.5C840 127 838 129 836.5 131C835 134 834 137 832.5 139.5C831.5 141 830 141.5 829.5 140C828.5 137 827 134 826 132C824.5 130 822 129.5 819.5 128C817 126.5 815 124 815.5 121C816 118 818 115.5 821 114.5Z" fill="#90b858" stroke="#6f9a40" stroke-width="0.6"/><path d="M917.6 126V110.7Q919.65 106.6 921.7 110.7V124H923.9V109.7Q925.95 105.6 928 109.7V124H930.1V111.3Q932.4 107.2 934.7 111.3V124.5H936.5V116.4Q938.55 112.3 940.6 116.4V133Q940.6 145.3 929 145.3Q921 145.3 918 139L908 131.5Q905.5 129 907 127.5Q908.5 126 911 127.5L917.6 132Z" fill="url(#gHand)" stroke="#c7955a" stroke-width="0.9" stroke-linejoin="round"/><rect x="964" y="109" width="35.8" height="35.8" rx="2.5" fill="url(#gOrange)" stroke="#eba050" stroke-width="0.8"/><circle cx="972.5" cy="136.3" r="3" fill="#fff"/><path d="M969.5 122.5A14 14 0 0 1 986.5 139.5" fill="none" stroke="#fff" stroke-width="4"/><path d="M969.5 113.5A23 23 0 0 1 995.5 139.5" fill="none" stroke="#fff" stroke-width="4"/><path d="M1015 145C1015 133 1021 129 1031 129C1041 129 1046 133 1046 145Z" fill="#c9474a" stroke="#8d3a3a" stroke-width="0.8"/><path d="M1025 129L1031 137L1037 129Z" fill="#fff" stroke="#aaa" stroke-width="0.5"/><path d="M1015.5 145C1015.5 137 1017 133 1020 131.5V145Z M1046 145C1046 137 1044.5 133 1041.5 131.5V145Z" fill="#eee"/><ellipse cx="1030.5" cy="120" rx="6.8" ry="8.3" fill="#f0cfa8" stroke="#a87a50" stroke-width="0.8"/><path d="M1023.3 121C1022 112 1026 107.5 1031 107.5C1037 107.5 1039.5 112 1038 121C1037 115 1034 114 1031 114C1027 114 1024.5 116 1023.3 121Z" fill="url(#gUserHair)"/><circle cx="1044.5" cy="131.5" r="5" fill="#f3c76e" stroke="#c8913e" stroke-width="1"/><circle cx="1044.5" cy="131.5" r="1.5" fill="#c8913e"/><path d="M1041.5 135L1032.5 144.5" stroke="#f3c76e" stroke-width="3.2" stroke-linecap="round"/><ellipse cx="1071" cy="130.5" rx="10" ry="5.5" fill="url(#gUserGreen)" stroke="#6f9e44" stroke-width="0.6"/><ellipse cx="1071" cy="117.5" rx="6" ry="7" fill="#efcba6" stroke="#a87a50" stroke-width="0.7"/><path d="M1065 118.5C1064 110.5 1068 109.5 1071 109.5C1074 109.5 1078 110.5 1077 118.5C1075 113.5 1067 113.5 1065 118.5Z" fill="url(#gUserHair)"/><ellipse cx="1088.5" cy="130.5" rx="10" ry="5.5" fill="url(#gUserGreen)" stroke="#6f9e44" stroke-width="0.6"/><ellipse cx="1088.5" cy="117.5" rx="6" ry="7" fill="#efcba6" stroke="#a87a50" stroke-width="0.7"/><path d="M1082.5 118.5C1081.5 110.5 1085.5 109.5 1088.5 109.5C1091.5 109.5 1095.5 110.5 1094.5 118.5C1092.5 113.5 1084.5 113.5 1082.5 118.5Z" fill="url(#gUserHair)"/><path d="M1066 143C1066 134 1071 131.5 1080 131.5C1089 131.5 1094 134 1094 143Z" fill="url(#gUserGreen)" stroke="#6f9e44" stroke-width="0.6"/><ellipse cx="1079.8" cy="124.5" rx="6.3" ry="7.5" fill="#f3d2ae" stroke="#a87a50" stroke-width="0.7"/><path d="M1073.5 125.5C1072.8 116.5 1076.8 115.5 1079.8 115.5C1082.8 115.5 1086.8 116.5 1086.1 125.5C1083.8 120.5 1075.8 120.5 1073.5 125.5Z" fill="url(#gUserHair)"/><rect x="1118.7" y="111.2" width="35.8" height="31.5" rx="1.5" fill="#fff" stroke="#a3acd6" stroke-width="1.3"/><rect x="1119.3" y="111.8" width="34.6" height="8" fill="#9fc8ee"/><path d="M1127.6 111.5V142.5M1136.6 111.5V142.5M1145.5 111.5V142.5M1119 119.8H1154.3M1119 126.8H1154.3M1119 134.5H1154.3" stroke="#b3bddf" stroke-width="1"/><rect x="1175" y="108" width="22" height="16" fill="#f0f2f8" stroke="#a7aed6" stroke-width="1"/><path d="M1167.5 123Q1167.5 119.5 1171 119.5H1201Q1204.5 119.5 1204.5 123V139.5Q1204.5 141 1203 141H1169Q1167.5 141 1167.5 139.5Z" fill="url(#gPlate)" stroke="#a7aed6" stroke-width="1"/><path d="M1173 119.5H1199V127Q1199 130 1196 130H1176Q1173 130 1173 127Z" fill="#8a94ac" stroke="#6f7893" stroke-width="0.6"/><rect x="1175" y="135.5" width="22" height="9" fill="#a5d3f3" stroke="#8fa3d2" stroke-width="1"/><circle cx="1234.7" cy="127.4" r="17" fill="url(#gGreenBall)" stroke="#79a94a" stroke-width="0.8"/><path d="M1226.5 123.5H1233.5V118L1245 127.5L1233.5 137V131.5H1226.5Z" fill="#f4f7fb" stroke="#7aa14a" stroke-width="0.8" stroke-linejoin="round"/><circle cx="1292.4" cy="127.4" r="17" fill="#f3f5fb" stroke="#9fa9d6" stroke-width="1"/><circle cx="1292.4" cy="127.4" r="14" fill="url(#gInfo)" stroke="#8aa0d8" stroke-width="0.6"/><ellipse cx="1292.6" cy="119" rx="3" ry="2.6" fill="#fff"/><path d="M1288.8 124H1295V133.5H1297V136H1288.3V133.5H1290.3V126.5H1288.8Z" fill="#fff"/><path d="M1339 124V118Q1339 109.5 1349.7 109.5Q1360.5 109.5 1360.5 118V124" fill="none" stroke="#9a9ca2" stroke-width="4.2"/><path d="M1339 124V118Q1339 109.5 1349.7 109.5Q1360.5 109.5 1360.5 118V124" fill="none" stroke="#d8dadd" stroke-width="1.8"/><rect x="1335" y="124" width="29.5" height="20.6" rx="1.5" fill="url(#gLock)" stroke="#cf8d48" stroke-width="1"/><circle cx="1349.7" cy="131.8" r="2.6" fill="#4c5466"/><path d="M1348.2 132.5L1347.3 139.5H1352.1L1351.2 132.5Z" fill="#4c5466"/><rect x="1391" y="107.8" width="3" height="14" rx="1" fill="#5b9bd5"/><rect x="1403.8" y="107.8" width="3" height="14" rx="1" fill="#5b9bd5"/><path d="M1384 120H1412.5V124H1410.5V131Q1410.5 138.5 1402 139H1394Q1386 138.5 1386 131V124H1384Z" fill="#5b9bd5"/><path d="M1399.8 125L1396.5 131.5H1399.5L1397.8 136.5L1402 129.5H1399L1400.8 125Z" fill="#fff"/><path d="M1394.5 139H1403.5V142.5L1401.5 145.5H1396.5L1394.5 142.5Z" fill="#5a5e66"/><rect x="1444" y="114" width="11.3" height="27.5" rx="1.5" fill="#f3b860" stroke="#b98b4a" stroke-width="1"/><rect x="1446.5" y="116.5" width="6" height="22.5" fill="#fbe8c4"/><path d="M1429 116.5Q1429 113.8 1431.5 113.3L1444.5 110.5Q1446.7 110.2 1446.7 112.5V142.5Q1446.7 144.8 1444.5 144.4L1431.5 141.5Q1429 141 1429 138.5Z" fill="#f3b860" stroke="#b98b4a" stroke-width="1"/><circle cx="1442.5" cy="126.5" r="1.3" fill="#8f6a3a"/><path d="M1449.5 125H1457V120.3L1465.8 127.3L1457 134.3V129.7H1449.5Z" fill="#5fe0a0" stroke="#3fb07a" stroke-width="0.8" stroke-linejoin="round"/><rect x="439" y="166.5" width="29.4" height="37" rx="1" fill="#f8fafd" stroke="#a3acd6" stroke-width="1.4"/><rect x="444" y="170.4" width="19.8" height="6.6" fill="#9fd1f2" stroke="#7fb0e0" stroke-width="0.8"/><path d="M444 179.6H464M444 182.3H451M444 184.7H451M444 189.2H451M444 191.6H451M444 194.2H451M444 196.6H451M444 199.2H451" stroke="#9aa6d0" stroke-width="1"/><rect x="452.8" y="186" width="5.2" height="14" rx="1" fill="#5a9fd8"/><rect x="458.6" y="181.5" width="5.4" height="18.5" rx="1" fill="#f29d5a"/><rect x="459.8" y="183" width="2.2" height="16" fill="#f9d2a4"/><circle cx="562.2" cy="185.8" r="17" fill="url(#gGreenBall)" stroke="#79a94a" stroke-width="0.8"/><path d="M554 182H561V176.5L572.5 186L561 195.5V190H554Z" fill="#f4f7fb" stroke="#7aa14a" stroke-width="0.8" stroke-linejoin="round"/><circle cx="682.9" cy="185.8" r="16.2" fill="#eef3fa" stroke="#e0686a" stroke-width="3.4"/><circle cx="682.9" cy="185.8" r="17.9" fill="none" stroke="#c85558" stroke-width="0.7"/><circle cx="694.40" cy="185.80" r="0.55" fill="#556"/><circle cx="692.86" cy="191.55" r="0.55" fill="#556"/><circle cx="688.65" cy="195.76" r="0.55" fill="#556"/><circle cx="682.90" cy="197.30" r="0.55" fill="#556"/><circle cx="677.15" cy="195.76" r="0.55" fill="#556"/><circle cx="672.94" cy="191.55" r="0.55" fill="#556"/><circle cx="671.40" cy="185.80" r="0.55" fill="#556"/><circle cx="672.94" cy="180.05" r="0.55" fill="#556"/><circle cx="677.15" cy="175.84" r="0.55" fill="#556"/><circle cx="682.90" cy="174.30" r="0.55" fill="#556"/><circle cx="688.65" cy="175.84" r="0.55" fill="#556"/><circle cx="692.86" cy="180.05" r="0.55" fill="#556"/><path d="M682.9 185.8L692.5 176.5M682.9 185.8V197" stroke="#8a909a" stroke-width="1.5" stroke-linecap="round"/><path d="M682.9 185.8H670.5" stroke="#e0585a" stroke-width="1.2"/><circle cx="682.9" cy="185.8" r="1.6" fill="#8a909a"/><rect x="1522.5" y="168" width="11" height="13.5" fill="#dfe8f8" stroke="#6f8fd0" stroke-width="1"/><path d="M1524.5 171.5H1531.5M1524.5 174H1531.5M1524.5 176.5H1531.5" stroke="#8aa2d8" stroke-width="0.8"/><rect x="1528.5" y="170.5" width="13" height="15.5" rx="1" fill="#3f7ad0" stroke="#2e60b0" stroke-width="0.8"/><text x="1535" y="182.8" font-family="Liberation Sans" font-weight="bold" font-size="12" fill="#fff" text-anchor="middle">?</text><path d="M28.5 171.5H36L38 173.5H46V176H28.5Z" fill="#7b7b7b"/><rect x="28.5" y="175.5" width="17.5" height="9.5" fill="#fbbd5c"/><path d="M30.5 331C30.5 326.5 33.5 325 38 325C42.5 325 45.5 326.5 45.5 331Z" fill="url(#gUserGreen)"/><ellipse cx="38" cy="319.5" rx="4.3" ry="5.3" fill="#e8b68a" stroke="#b0703f" stroke-width="0.6"/><path d="M33.7 320C33 315 35.5 313.8 38 313.8C40.5 313.8 43 315 42.3 320C41.5 317 40 316.5 38 316.5C36 316.5 34.5 317 33.7 320Z" fill="#c07a45"/><path d="M79.3 214V740M79.3 214H101" stroke="#b4bcb4" stroke-width="0.9" stroke-dasharray="1 2" fill="none"/><path d="M88 257.6H101" stroke="#b4bcb4" stroke-width="0.9" stroke-dasharray="1 2"/><path d="M88 301.4H101" stroke="#b4bcb4" stroke-width="0.9" stroke-dasharray="1 2"/><path d="M88 345.1H101" stroke="#b4bcb4" stroke-width="0.9" stroke-dasharray="1 2"/><path d="M88 388.9H101" stroke="#b4bcb4" stroke-width="0.9" stroke-dasharray="1 2"/><path d="M88 432.6H101" stroke="#b4bcb4" stroke-width="0.9" stroke-dasharray="1 2"/><path d="M88 476.4H101" stroke="#b4bcb4" stroke-width="0.9" stroke-dasharray="1 2"/><path d="M88 520.1H101" stroke="#b4bcb4" stroke-width="0.9" stroke-dasharray="1 2"/><path d="M88 563.9H101" stroke="#b4bcb4" stroke-width="0.9" stroke-dasharray="1 2"/><path d="M88 607.6H101" stroke="#b4bcb4" stroke-width="0.9" stroke-dasharray="1 2"/><path d="M88 651.4H101" stroke="#b4bcb4" stroke-width="0.9" stroke-dasharray="1 2"/><path d="M88 695.1H101" stroke="#b4bcb4" stroke-width="0.9" stroke-dasharray="1 2"/><path d="M88 738.9H101" stroke="#b4bcb4" stroke-width="0.9" stroke-dasharray="1 2"/><circle cx="79.0" cy="257.6" r="7.7" fill="none" stroke="#98ab9e" stroke-width="1.1"/><path d="M75.0 257.6H82.5M79.5 254.3L82.8 257.6L79.5 260.90000000000003" fill="none" stroke="#8fa196" stroke-width="1.2"/><circle cx="79.0" cy="301.4" r="7.7" fill="none" stroke="#98ab9e" stroke-width="1.1"/><path d="M75.0 301.4H82.5M79.5 298.09999999999997L82.8 301.4L79.5 304.7" fill="none" stroke="#8fa196" stroke-width="1.2"/><circle cx="79.0" cy="345.1" r="7.7" fill="none" stroke="#98ab9e" stroke-width="1.1"/><path d="M75.0 345.1H82.5M79.5 341.8L82.8 345.1L79.5 348.40000000000003" fill="none" stroke="#8fa196" stroke-width="1.2"/><circle cx="79.0" cy="388.9" r="7.7" fill="none" stroke="#98ab9e" stroke-width="1.1"/><path d="M75.0 388.9H82.5M79.5 385.59999999999997L82.8 388.9L79.5 392.2" fill="none" stroke="#8fa196" stroke-width="1.2"/><circle cx="79.0" cy="432.6" r="7.7" fill="none" stroke="#98ab9e" stroke-width="1.1"/><path d="M75.0 432.6H82.5M79.5 429.3L82.8 432.6L79.5 435.90000000000003" fill="none" stroke="#8fa196" stroke-width="1.2"/><circle cx="79.0" cy="476.4" r="7.7" fill="none" stroke="#98ab9e" stroke-width="1.1"/><path d="M75.0 476.4H82.5M79.5 473.09999999999997L82.8 476.4L79.5 479.7" fill="none" stroke="#8fa196" stroke-width="1.2"/><circle cx="79.0" cy="520.1" r="7.7" fill="none" stroke="#98ab9e" stroke-width="1.1"/><path d="M75.0 520.1H82.5M79.5 516.8000000000001L82.8 520.1L79.5 523.4" fill="none" stroke="#8fa196" stroke-width="1.2"/><circle cx="79.0" cy="563.9" r="7.7" fill="none" stroke="#98ab9e" stroke-width="1.1"/><path d="M75.0 563.9H82.5M79.5 560.6L82.8 563.9L79.5 567.1999999999999" fill="none" stroke="#8fa196" stroke-width="1.2"/><circle cx="79.0" cy="607.6" r="7.7" fill="none" stroke="#98ab9e" stroke-width="1.1"/><path d="M75.0 607.6H82.5M79.5 604.3000000000001L82.8 607.6L79.5 610.9" fill="none" stroke="#8fa196" stroke-width="1.2"/><circle cx="79.0" cy="651.4" r="7.7" fill="none" stroke="#98ab9e" stroke-width="1.1"/><path d="M75.0 651.4H82.5M79.5 648.1L82.8 651.4L79.5 654.6999999999999" fill="none" stroke="#8fa196" stroke-width="1.2"/><circle cx="79.0" cy="695.1" r="7.7" fill="none" stroke="#98ab9e" stroke-width="1.1"/><path d="M75.0 695.1H82.5M79.5 691.8000000000001L82.8 695.1L79.5 698.4" fill="none" stroke="#8fa196" stroke-width="1.2"/><circle cx="79.0" cy="738.9" r="7.7" fill="none" stroke="#98ab9e" stroke-width="1.1"/><path d="M75.0 738.9H82.5M79.5 735.6L82.8 738.9L79.5 742.1999999999999" fill="none" stroke="#8fa196" stroke-width="1.2"/><path d="M104.7 201.9Q104.7 200.9 105.7 200.9H115.7L118.0 204.6H134.9Q135.8 204.6 135.8 205.6V225.9H104.7Z" fill="url(#gFolderB)" stroke="#7c7c7c" stroke-width="0.9"/><path d="M106.5 211.0H136.5V226.20000000000002Q136.5 227.0 135.7 227.0H105.5Q104.7 227.0 104.7 226.20000000000002V212.6Q104.8 211.0 106.5 211.0Z" fill="url(#gFolderF)" stroke="#707070" stroke-width="0.9"/><path d="M107.2 212.0H135.5" stroke="#f4f4f4" stroke-width="0.8"/><path d="M104.7 245.70000000000002Q104.7 244.70000000000002 105.7 244.70000000000002H115.7L118.0 248.4H134.9Q135.8 248.4 135.8 249.4V269.70000000000005H104.7Z" fill="url(#gFolderB)" stroke="#7c7c7c" stroke-width="0.9"/><path d="M106.5 254.8H136.5V270.0Q136.5 270.8 135.7 270.8H105.5Q104.7 270.8 104.7 270.0V256.40000000000003Q104.8 254.8 106.5 254.8Z" fill="url(#gFolderF)" stroke="#707070" stroke-width="0.9"/><path d="M107.2 255.8H135.5" stroke="#f4f4f4" stroke-width="0.8"/><path d="M104.7 289.4Q104.7 288.4 105.7 288.4H115.7L118.0 292.09999999999997H134.9Q135.8 292.09999999999997 135.8 293.09999999999997V313.4H104.7Z" fill="url(#gFolderB)" stroke="#7c7c7c" stroke-width="0.9"/><path d="M106.5 298.5H136.5V313.7Q136.5 314.5 135.7 314.5H105.5Q104.7 314.5 104.7 313.7V300.09999999999997Q104.8 298.5 106.5 298.5Z" fill="url(#gFolderF)" stroke="#707070" stroke-width="0.9"/><path d="M107.2 299.5H135.5" stroke="#f4f4f4" stroke-width="0.8"/><path d="M104.7 333.09999999999997Q104.7 332.09999999999997 105.7 332.09999999999997H115.7L118.0 335.79999999999995H134.9Q135.8 335.79999999999995 135.8 336.79999999999995V357.09999999999997H104.7Z" fill="url(#gFolderB)" stroke="#7c7c7c" stroke-width="0.9"/><path d="M106.5 342.2H136.5V357.4Q136.5 358.2 135.7 358.2H105.5Q104.7 358.2 104.7 357.4V343.79999999999995Q104.8 342.2 106.5 342.2Z" fill="url(#gFolderF)" stroke="#707070" stroke-width="0.9"/><path d="M107.2 343.2H135.5" stroke="#f4f4f4" stroke-width="0.8"/><path d="M104.7 376.9Q104.7 375.9 105.7 375.9H115.7L118.0 379.59999999999997H134.9Q135.8 379.59999999999997 135.8 380.59999999999997V400.9H104.7Z" fill="url(#gFolderB)" stroke="#7c7c7c" stroke-width="0.9"/><path d="M106.5 386.0H136.5V401.2Q136.5 402.0 135.7 402.0H105.5Q104.7 402.0 104.7 401.2V387.59999999999997Q104.8 386.0 106.5 386.0Z" fill="url(#gFolderF)" stroke="#707070" stroke-width="0.9"/><path d="M107.2 387.0H135.5" stroke="#f4f4f4" stroke-width="0.8"/><path d="M104.7 420.7Q104.7 419.7 105.7 419.7H115.7L118.0 423.4H134.9Q135.8 423.4 135.8 424.4V444.7H104.7Z" fill="url(#gFolderB)" stroke="#7c7c7c" stroke-width="0.9"/><path d="M106.5 429.8H136.5V445.0Q136.5 445.8 135.7 445.8H105.5Q104.7 445.8 104.7 445.0V431.4Q104.8 429.8 106.5 429.8Z" fill="url(#gFolderF)" stroke="#707070" stroke-width="0.9"/><path d="M107.2 430.8H135.5" stroke="#f4f4f4" stroke-width="0.8"/><path d="M104.7 464.4Q104.7 463.4 105.7 463.4H115.7L118.0 467.09999999999997H134.9Q135.8 467.09999999999997 135.8 468.09999999999997V488.4H104.7Z" fill="url(#gFolderB)" stroke="#7c7c7c" stroke-width="0.9"/><path d="M106.5 473.5H136.5V488.7Q136.5 489.5 135.7 489.5H105.5Q104.7 489.5 104.7 488.7V475.09999999999997Q104.8 473.5 106.5 473.5Z" fill="url(#gFolderF)" stroke="#707070" stroke-width="0.9"/><path d="M107.2 474.5H135.5" stroke="#f4f4f4" stroke-width="0.8"/><path d="M104.7 508.09999999999997Q104.7 507.09999999999997 105.7 507.09999999999997H115.7L118.0 510.79999999999995H134.9Q135.8 510.79999999999995 135.8 511.79999999999995V532.0999999999999H104.7Z" fill="url(#gFolderB)" stroke="#7c7c7c" stroke-width="0.9"/><path d="M106.5 517.1999999999999H136.5V532.4Q136.5 533.1999999999999 135.7 533.1999999999999H105.5Q104.7 533.1999999999999 104.7 532.4V518.8Q104.8 517.1999999999999 106.5 517.1999999999999Z" fill="url(#gFolderF)" stroke="#707070" stroke-width="0.9"/><path d="M107.2 518.1999999999999H135.5" stroke="#f4f4f4" stroke-width="0.8"/><path d="M104.7 551.9Q104.7 550.9 105.7 550.9H115.7L118.0 554.6H134.9Q135.8 554.6 135.8 555.6V575.9H104.7Z" fill="url(#gFolderB)" stroke="#7c7c7c" stroke-width="0.9"/><path d="M106.5 561.0H136.5V576.1999999999999Q136.5 577.0 135.7 577.0H105.5Q104.7 577.0 104.7 576.1999999999999V562.6Q104.8 561.0 106.5 561.0Z" fill="url(#gFolderF)" stroke="#707070" stroke-width="0.9"/><path d="M107.2 562.0H135.5" stroke="#f4f4f4" stroke-width="0.8"/><path d="M104.7 595.6999999999999Q104.7 594.6999999999999 105.7 594.6999999999999H115.7L118.0 598.4H134.9Q135.8 598.4 135.8 599.4V619.6999999999999H104.7Z" fill="url(#gFolderB)" stroke="#7c7c7c" stroke-width="0.9"/><path d="M106.5 604.8H136.5V619.9999999999999Q136.5 620.8 135.7 620.8H105.5Q104.7 620.8 104.7 619.9999999999999V606.4Q104.8 604.8 106.5 604.8Z" fill="url(#gFolderF)" stroke="#707070" stroke-width="0.9"/><path d="M107.2 605.8H135.5" stroke="#f4f4f4" stroke-width="0.8"/><path d="M104.7 639.4Q104.7 638.4 105.7 638.4H115.7L118.0 642.1H134.9Q135.8 642.1 135.8 643.1V663.4H104.7Z" fill="url(#gFolderB)" stroke="#7c7c7c" stroke-width="0.9"/><path d="M106.5 648.5H136.5V663.6999999999999Q136.5 664.5 135.7 664.5H105.5Q104.7 664.5 104.7 663.6999999999999V650.1Q104.8 648.5 106.5 648.5Z" fill="url(#gFolderF)" stroke="#707070" stroke-width="0.9"/><path d="M107.2 649.5H135.5" stroke="#f4f4f4" stroke-width="0.8"/><path d="M104.7 683.1Q104.7 682.1 105.7 682.1H115.7L118.0 685.8000000000001H134.9Q135.8 685.8000000000001 135.8 686.8000000000001V707.1H104.7Z" fill="url(#gFolderB)" stroke="#7c7c7c" stroke-width="0.9"/><path d="M106.5 692.2H136.5V707.4Q136.5 708.2 135.7 708.2H105.5Q104.7 708.2 104.7 707.4V693.8000000000001Q104.8 692.2 106.5 692.2Z" fill="url(#gFolderF)" stroke="#707070" stroke-width="0.9"/><path d="M107.2 693.2H135.5" stroke="#f4f4f4" stroke-width="0.8"/><path d="M104.7 726.9Q104.7 725.9 105.7 725.9H115.7L118.0 729.6H134.9Q135.8 729.6 135.8 730.6V750.9H104.7Z" fill="url(#gFolderB)" stroke="#7c7c7c" stroke-width="0.9"/><path d="M106.5 736.0H136.5V751.1999999999999Q136.5 752.0 135.7 752.0H105.5Q104.7 752.0 104.7 751.1999999999999V737.6Q104.8 736.0 106.5 736.0Z" fill="url(#gFolderF)" stroke="#707070" stroke-width="0.9"/><path d="M107.2 737.0H135.5" stroke="#f4f4f4" stroke-width="0.8"/><rect x="435.09999999999997" y="612.8000000000001" width="29.8" height="33.3" rx="2.5" fill="url(#gBook)" stroke="#5b86c0" stroke-width="0.8"/><rect x="441.09999999999997" y="613.6" width="23" height="2.6" fill="#f6fbff"/><path d="M437.59999999999997 612.8000000000001H440.79999999999995V646.1H437.59999999999997Q435.09999999999997 646.1 435.09999999999997 643.6V615.3000000000001Q435.09999999999997 612.8000000000001 437.59999999999997 612.8000000000001Z" fill="url(#gSpine)"/><rect x="558.4" y="613.7" width="29.8" height="33.3" rx="2.5" fill="url(#gBook)" stroke="#5b86c0" stroke-width="0.8"/><rect x="564.4" y="614.5" width="23" height="2.6" fill="#f6fbff"/><path d="M560.9 613.7H564.1V647.0H560.9Q558.4 647.0 558.4 644.5V616.2Q558.4 613.7 560.9 613.7Z" fill="url(#gSpine)"/><rect x="720.4" y="613.7" width="29.8" height="33.3" rx="2.5" fill="url(#gBook)" stroke="#5b86c0" stroke-width="0.8"/><rect x="726.4" y="614.5" width="23" height="2.6" fill="#f6fbff"/><path d="M722.9 613.7H726.1V647.0H722.9Q720.4 647.0 720.4 644.5V616.2Q720.4 613.7 722.9 613.7Z" fill="url(#gSpine)"/><rect x="857.8" y="613.7" width="29.8" height="33.3" rx="2.5" fill="url(#gBook)" stroke="#5b86c0" stroke-width="0.8"/><rect x="863.8" y="614.5" width="23" height="2.6" fill="#f6fbff"/><path d="M860.3 613.7H863.5V647.0H860.3Q857.8 647.0 857.8 644.5V616.2Q857.8 613.7 860.3 613.7Z" fill="url(#gSpine)"/><rect x="435.5" y="704" width="235.5" height="160" fill="#d9f0fd"/><path d="M563 776C560 784 557 792 553 801L556 802C560 795 564 788 566 780Z" fill="#8b5636"/><path d="M567 768C566 785 565 800 563 812L576 864H590L600 812C601 806 601 800 600 797C594 797 586 795 578 788Z" fill="#edc8b8"/><path d="M575 800C580 815 585 825 595 830" stroke="#e2b2a2" stroke-width="1.2" fill="none"/><path d="M498 864C502 848 508 832 515.5 823C520 819 525 817.5 528 817C540 810 550 802 559.5 795L563 797C563 812 568 835 576 864Z" fill="#fbfbfb"/><path d="M600 799.7C604 803 609 806 615 808C628 811 640 813 650 813.6C652 830 652 848 651.6 864H590C594 840 598 820 600 799.7Z" fill="#fdfdfd"/><path d="M528 817C522 832 515 850 512 864M545.5 812C545 830 544.5 850 544.5 864M639.5 815C640 830 641 850 643 864" stroke="#e4e4e4" stroke-width="1" fill="none"/><path d="M563 797C565 815 570 840 576 864M600 799.7C599 820 594 845 590 864" stroke="#d8d8d8" stroke-width="1" fill="none"/><path d="M568 752C568 728 583 718 600 718C618 718 631 728 630 746C630 752 628 757 627 760C623 770 620 776 616 782C610 792 603 798 596.7 798C588 797 580 792 576 787C572 781 569.5 774 569.4 767Z" fill="url(#gSkin)"/><path d="M568 745C562 744 559 749 560 756C561 762 564 767 569 767Z" fill="#e9bca8"/><path d="M565 738C566 720 580 707.6 601 707.6C619 708 631 722 630.5 740L629.4 746C626 738 620 730 612 728.5C600 726 585 730 577 737C573 740 570 744 568 750Z" fill="url(#gHair)"/><path d="M570 732C578 720 588 714 598 712" stroke="#d9bb92" stroke-width="2" fill="none" opacity="0.8"/><path d="M588 744Q598 741 607 746M616 753Q623 751 628 754" stroke="#a27a62" stroke-width="1.3" fill="none"/><ellipse cx="597" cy="753.5" rx="3.6" ry="1.9" fill="#71909f"/><ellipse cx="620" cy="761" rx="3.2" ry="1.8" fill="#71909f"/><path d="M609 758Q604 770 606 774Q609 776 612 774" stroke="#d9a593" stroke-width="1" fill="none"/><path d="M591.2 782Q599 779 609.8 783Q607 789.4 599 789Q593 788 591.2 782Z" fill="#ef8676"/><rect x="435.5" y="704.5" width="235" height="159" fill="none" stroke="#333" stroke-width="1" stroke-dasharray="1 1"/><rect x="40.5" y="921.5" width="29" height="26" rx="2" fill="#edf1f9" stroke="#6f8fcc" stroke-width="1.2"/><rect x="41" y="922" width="28" height="7" fill="url(#gWinTitle)"/><circle cx="65" cy="925.2" r="1.6" fill="#e83a3a"/><path d="M220.5 914H241.0L250.0 923V951H220.5Z" fill="url(#gPage)" stroke="#98a0d0" stroke-width="1.2" stroke-linejoin="round"/><path d="M241.0 914V923H250.0" fill="#fff" stroke="#98a0d0" stroke-width="1.2" stroke-linejoin="round"/><text x="235.0" y="938.5" font-family="Liberation Serif" font-weight="bold" font-size="15.5" fill="#1f2a44" text-anchor="middle">AB</text><path d="M424 914H444.5L453.5 923V951H424Z" fill="url(#gPage)" stroke="#98a0d0" stroke-width="1.2" stroke-linejoin="round"/><path d="M444.5 914V923H453.5" fill="#fff" stroke="#98a0d0" stroke-width="1.2" stroke-linejoin="round"/><text x="438.5" y="938.5" font-family="Liberation Serif" font-weight="bold" font-size="15.5" fill="#1f2a44" text-anchor="middle">AB</text><path d="M626.8 916H647.3L656.3 925V953H626.8Z" fill="url(#gPage)" stroke="#98a0d0" stroke-width="1.2" stroke-linejoin="round"/><path d="M647.3 916V925H656.3" fill="#fff" stroke="#98a0d0" stroke-width="1.2" stroke-linejoin="round"/><text x="641.3" y="940.5" font-family="Liberation Serif" font-weight="bold" font-size="15.5" fill="#1f2a44" text-anchor="middle">AB</text><circle cx="38.8" cy="975.2" r="10" fill="#3f7fc3"/><rect x="37.4" y="970.2" width="3" height="10" fill="#fff"/><rect x="37.4" y="966.3" width="3" height="2.6" fill="#fff"/><rect x="261.3" y="965.2" width="14.6" height="18.5" rx="3" fill="url(#gDB)" stroke="#c98a3a" stroke-width="0.8"/><path d="M261.5 972.8H275.7M261.5 978.2H275.7" stroke="#c98a3a" stroke-width="0.9"/><path d="M430 984C430 979 433 977.3 438.7 977.3C444.4 977.3 447.5 979 447.5 984Z" fill="url(#gUserGreen)" stroke="#6fa040" stroke-width="0.5"/><ellipse cx="438.7" cy="972.3" rx="4.8" ry="6" fill="#efc08e" stroke="#b57440" stroke-width="0.6"/><path d="M433.8 973C433 967.5 436 966.3 438.7 966.3C441.4 966.3 444.4 967.5 443.6 973C442.5 969.5 441 969 438.7 969C436.4 969 434.9 969.5 433.8 973Z" fill="#c57c45"/><rect x="609" y="966.5" width="16.8" height="17.3" fill="#f4f6fb" stroke="#7a8ed0" stroke-width="1"/><rect x="609" y="966.5" width="16.8" height="4.6" fill="#e0584a"/><text x="617.4" y="982" font-family="Liberation Sans" font-weight="bold" font-size="10.5" fill="#2d3a50" text-anchor="middle">31</text></svg>
</body></html>
